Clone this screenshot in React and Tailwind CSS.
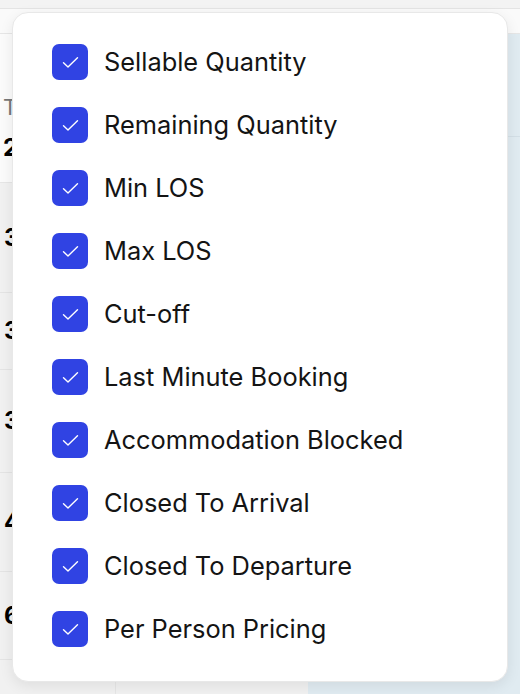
import React from 'react';

const columns = [
  'Sellable Quantity',
  'Remaining Quantity',
  'Min LOS',
  'Max LOS',
  'Cut-off',
  'Last Minute Booking',
  'Accommodation Blocked',
  'Closed To Arrival',
  'Closed To Departure',
  'Per Person Pricing',
];

// background table rows peeking out on the left edge
const rows = [
  { h: 'h-[110px]', v: '3' },
  { h: 'h-[77px]', v: '3' },
  { h: 'h-[103px]', v: '3' },
  { h: 'h-[99px]', v: '4' },
  { h: 'h-[88px]', v: '6' },
];

function CheckIcon() {
  return (
    <svg width="17" height="13" viewBox="0 0 17 13" fill="none">
      <path d="M1.5 6.7 L6 11 L15.5 1.8" stroke="white" strokeWidth="1.4" strokeLinecap="round" strokeLinejoin="round" />
    </svg>
  );
}

export default function App() {
  return (
    <div className="relative w-[520px] h-[694px] overflow-hidden bg-[#f1f1f1] flex flex-col" style={{ fontFamily: 'Inter, "Noto Sans", sans-serif' }}>
      {/* page behind the popover */}
      <div className="h-[9px] bg-[#f3f3f3] border-b border-[#e4e4e4]" />
      <div className="h-[25px] bg-[#fafafa] border-b border-[#e6e6e6]" />
      <div className="flex flex-1">
        <div className="w-[308px] flex flex-col">
          <div className="h-[149px] bg-[#fbfbfb] border-b border-[#e6e6e6] flex flex-col pt-[62px] pl-[3px]">
            <span className="text-[22px] leading-none text-[#777]">T</span>
            <span className="text-[24px] leading-none font-bold text-black mt-[18px]">2</span>
          </div>
          {rows.map((r, i) => (
            <div key={i} className={`${r.h} flex border-b border-[#e4e4e4]`}>
              <div className="w-[116px] border-r border-[#e6e6e6] flex items-center pl-[4px]">
                <span className="text-[24px] font-bold text-black">{r.v}</span>
              </div>
              <div className="flex-1" />
            </div>
          ))}
          <div className="flex-1 flex">
            <div className="w-[116px] border-r border-[#e6e6e6]" />
          </div>
        </div>
        <div className="flex-1 flex flex-col bg-[#e0ebf1]">
          <div className="h-[103px] border-b border-[#d3dfe6]" />
        </div>
      </div>

      {/* column picker popover */}
      <div className="absolute left-[12px] top-[12px] w-[496px] h-[670px] rounded-[16px] bg-white border border-[#e8e8e8] shadow-[0_4px_14px_rgba(0,0,0,0.08)] pt-[31px] pl-[39px]">
        <ul className="flex flex-col gap-[27px]">
          {columns.map((c) => (
            <li key={c} className="flex items-center gap-[16px] h-[36px]">
              <span className="w-[36px] h-[36px] rounded-[7px] bg-[#3043e3] flex items-center justify-center shrink-0">
                <CheckIcon />
              </span>
              <span className="text-[25.4px] leading-none text-[#141414]">{c}</span>
            </li>
          ))}
        </ul>
      </div>
    </div>
  );
}
